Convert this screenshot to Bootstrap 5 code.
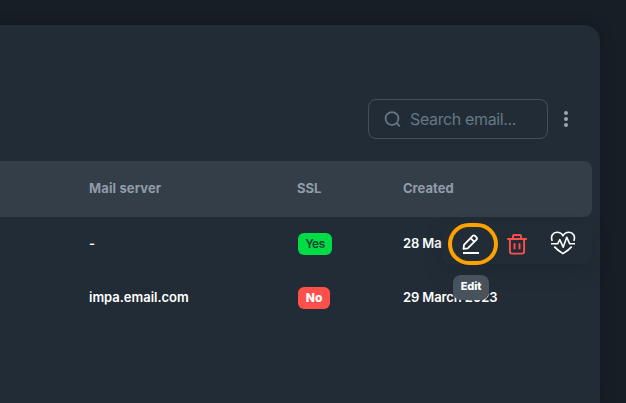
<!DOCTYPE html>
<html lang="en">
<head>
<meta charset="utf-8">
<meta name="viewport" content="width=device-width, initial-scale=1">
<title>Email accounts</title>
<link href="https://cdn.jsdelivr.net/npm/bootstrap@5.3.0/dist/css/bootstrap.min.css" rel="stylesheet">
<style>
body{background:#171e26;font-family:Inter,"Liberation Sans",sans-serif;font-size:13px;color:#fff;height:403px}
.panel{margin:25px 26px 0 0;height:378px;background:#222c36;border-radius:0 16px 0 0;padding-right:8px;box-shadow:0 0 12px rgba(20,20,30,.5)}
.toolbar{padding:74px 22px 0 0;height:136px}
.search{width:180px;height:40px;border:1px solid #43505c;border-radius:8px;padding-left:15px;color:#667785}
.search input{background:none;border:0;outline:0;padding:0;margin:-1px 0 0 9px;width:125px;font-size:16px;color:#667785;letter-spacing:-.36px}
.search input::placeholder{color:#667785;opacity:1}
.more{background:none;border:0;padding:0;width:8px;height:40px;margin-left:14px}
.mail-grid{display:grid;grid-template-columns:208px 106px 1fr;padding-left:89px;align-items:center}
.head{height:56px;background:#343e48;border-radius:0 8px 8px 0;color:#8f9ca8;font-weight:700;padding-bottom:1px}
.line{height:54px;position:relative;font-weight:600;padding-bottom:1px}
.tag{display:inline-flex;align-items:center;justify-content:center;height:22px;border-radius:6px;font-size:12px;margin:1px 0 0 1px}
.tag-yes{width:34px;background:#00dc46;color:#1d4235;font-weight:600;letter-spacing:-.5px}
.tag-no{width:32px;background:#ff4f4b;font-weight:800}
.actions{position:absolute;z-index:2;left:442px;top:7px;width:150px;height:40px;border-radius:8px;background:#222c36;box-shadow:0 8px 18px rgba(24,30,40,.3)}
.ring{width:50px;height:42px;margin:-1px 0 0 6px;border:4px solid #ffa200;border-radius:22px;display:flex;align-items:center;justify-content:center;flex:none;padding-right:4px}
.tip{position:absolute;z-index:3;left:453px;top:58px;width:36px;height:25px;border-radius:8px;background:#47525d;font-size:11px;font-weight:800;letter-spacing:-.1px;padding-bottom:2px}
.w-server{letter-spacing:.12px}.w-mail{letter-spacing:-.02px}.w-date{letter-spacing:-.12px}
svg{display:block;flex:none}
.trash{margin-left:8px}
.health{margin:-2px 0 0 22px}
</style>
</head>
<body class="overflow-hidden">
<main class="panel">
  <div class="toolbar d-flex justify-content-end align-items-start">
    <label class="search d-flex align-items-center">
      <svg width="17" height="17" viewBox="0 0 17 17" fill="none" stroke="currentColor" stroke-width="1.8" stroke-linecap="round"><circle cx="8" cy="7.500" r="6.400"/><path d="M12.600 12.100l2.800 2.800"/></svg>
      <input type="text" placeholder="Search email...">
    </label>
    <button class="more d-flex align-items-center justify-content-center" aria-label="More">
      <svg width="6" height="16" viewBox="0 0 6 16" fill="#9aa7b3"><circle cx="3" cy="2" r="2"/><circle cx="3" cy="8" r="2"/><circle cx="3" cy="14" r="2"/></svg>
    </button>
  </div>
  <div class="mail-grid head">
    <span class="w-server">Mail server</span><span>SSL</span><span>Created</span>
  </div>
  <div class="mail-grid line">
    <span>-</span>
    <span class="d-flex"><span class="tag tag-yes">Yes</span></span>
    <span class="w-date">28 March 2023</span>
    <div class="actions d-flex align-items-center">
      <div class="ring">
        <svg width="20" height="22" viewBox="0 0 20 22" fill="none" stroke="#fff" stroke-width="1.8" stroke-linejoin="round"><path d="M2.500 15.800l.5-4L11.700 2.900a1.600 1.600 0 0 1 2.300 0l1.500 1.500a1.600 1.600 0 0 1 0 2.300L6.700 15.400zM9.600 5.100l3.700 3.700"/><path d="M2 20h16" stroke-width="2"/></svg>
      </div>
      <svg class="trash" width="22" height="22" viewBox="0 0 22 22" fill="none" stroke="#ff4f4b" stroke-width="1.900" stroke-linejoin="round"><path d="M1.200 6h19.600M7 6V3.200Q7 2 8.200 2h5.600Q15 2 15 3.200V6M3.900 6v12.600Q3.900 20.600 5.900 20.600h10.200Q18.100 20.600 18.100 18.600V6M8.500 10.300v6M13.500 10.300v6"/></svg>
      <svg class="health" width="26" height="24" viewBox="0 0 26 24" fill="none" stroke="#fff" stroke-width="1.600" stroke-linejoin="round"><path d="M2.200 10C.2 5 3.200 1.200 7 1.200c3 0 5 1.700 6 3.700 1-2 3-3.700 6-3.700 3.800 0 6.800 3.800 4.800 8.800M1 12.800h6.600l2.200-4.100 3.400 7.500 3.500-10 3 6.600H25M4.300 15.600Q7.500 19.200 13 22.700q5.500-3.500 8.700-7.100"/></svg>
    </div>
    <div class="tip d-flex align-items-center justify-content-center">Edit</div>
  </div>
  <div class="mail-grid line">
    <span class="w-mail">impa.email.com</span>
    <span class="d-flex"><span class="tag tag-no">No</span></span>
    <span class="w-date">29 March 2023</span>
  </div>
</main>
<script src="https://cdn.jsdelivr.net/npm/bootstrap@5.3.0/dist/js/bootstrap.bundle.min.js"></script>
</body>
</html>
